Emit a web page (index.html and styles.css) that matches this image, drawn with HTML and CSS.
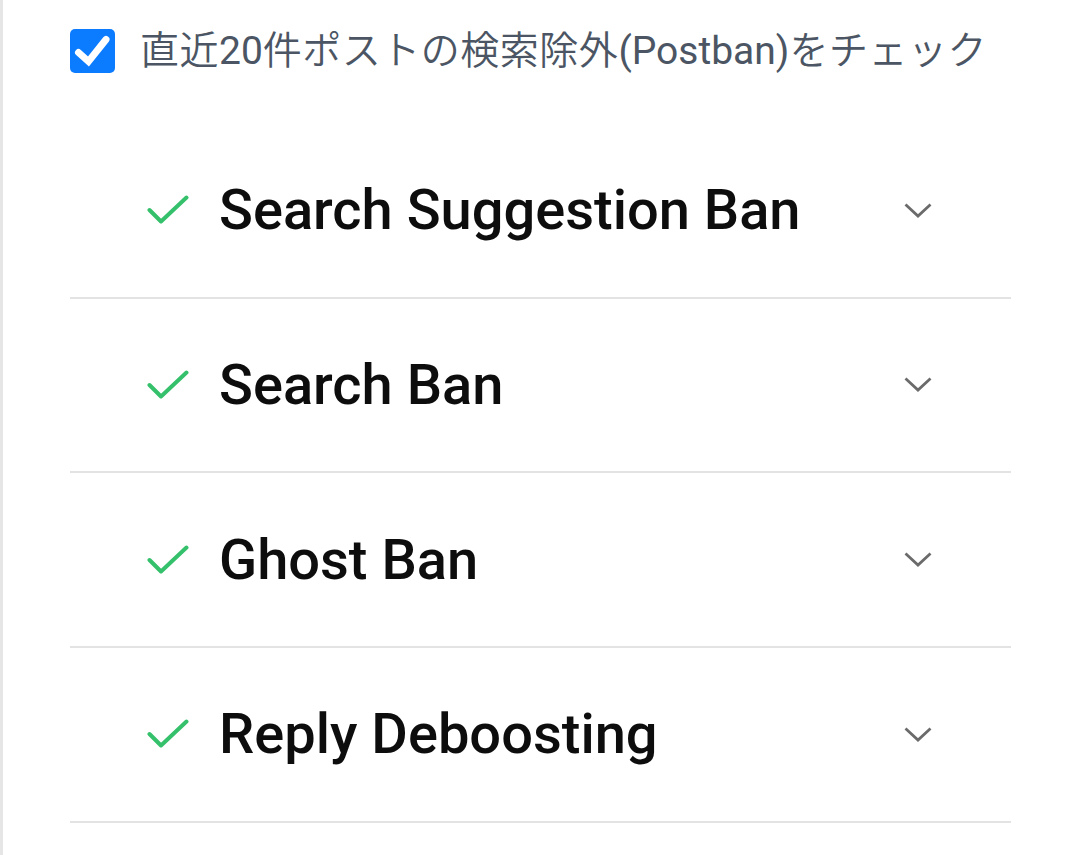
FILE: index.html
```html
<!DOCTYPE html>
<html lang="ja">
<head>
<meta charset="utf-8">
<link rel="stylesheet" href="styles.css">
</head>
<body>
<div class="page">
  <label class="filter">
    <span class="box">
      <svg viewBox="0 0 45 44" width="45" height="44"><path d="M8.5 23.5 L18.5 32.5 L36 10.5" fill="none" stroke="#fff" stroke-width="7" stroke-linecap="round" stroke-linejoin="miter"/></svg>
    </span>
    <span class="filter-text"><span class="ja">直近</span>20<span class="ja">件ポストの検索除外</span>(Postban)<span class="ja">をチェック</span></span>
  </label>
  <ul class="list">
    <li class="item">
      <svg class="ok" viewBox="0 0 42 30" width="42" height="30"><path d="M2.5 15 L14 26.5 L39.5 2.5" fill="none" stroke="#35c06c" stroke-width="4" stroke-linecap="round" stroke-linejoin="round"/></svg>
      <span class="title">Search Suggestion Ban</span>
      <svg class="chev" viewBox="0 0 28 15" width="28" height="15"><path d="M1.5 1.5 L14 13 L26.5 1.5" fill="none" stroke="#6b6b6b" stroke-width="2.8"/></svg>
    </li>
    <li class="item">
      <svg class="ok" viewBox="0 0 42 30" width="42" height="30"><path d="M2.5 15 L14 26.5 L39.5 2.5" fill="none" stroke="#35c06c" stroke-width="4" stroke-linecap="round" stroke-linejoin="round"/></svg>
      <span class="title">Search Ban</span>
      <svg class="chev" viewBox="0 0 28 15" width="28" height="15"><path d="M1.5 1.5 L14 13 L26.5 1.5" fill="none" stroke="#6b6b6b" stroke-width="2.8"/></svg>
    </li>
    <li class="item">
      <svg class="ok" viewBox="0 0 42 30" width="42" height="30"><path d="M2.5 15 L14 26.5 L39.5 2.5" fill="none" stroke="#35c06c" stroke-width="4" stroke-linecap="round" stroke-linejoin="round"/></svg>
      <span class="title">Ghost Ban</span>
      <svg class="chev" viewBox="0 0 28 15" width="28" height="15"><path d="M1.5 1.5 L14 13 L26.5 1.5" fill="none" stroke="#6b6b6b" stroke-width="2.8"/></svg>
    </li>
    <li class="item">
      <svg class="ok" viewBox="0 0 42 30" width="42" height="30"><path d="M2.5 15 L14 26.5 L39.5 2.5" fill="none" stroke="#35c06c" stroke-width="4" stroke-linecap="round" stroke-linejoin="round"/></svg>
      <span class="title">Reply Deboosting</span>
      <svg class="chev" viewBox="0 0 28 15" width="28" height="15"><path d="M1.5 1.5 L14 13 L26.5 1.5" fill="none" stroke="#6b6b6b" stroke-width="2.8"/></svg>
    </li>
  </ul>
</div>
</body>
</html>
```
FILE: styles.css
```css
html, body {
  margin: 0;
  padding: 0;
  background: #ffffff;
}
.page {
  box-sizing: border-box;
  min-height: 855px;
  width: 1075px;
  border-left: 3px solid #e6e6e6;
  padding: 29px 64px 0 67px;
  font-family: Roboto, "Noto Sans CJK JP", sans-serif;
}
.filter {
  display: flex;
  align-items: center;
  gap: 25px;
  height: 44px;
}
.box {
  width: 45px;
  height: 44px;
  border-radius: 5px;
  background: #0b7bff;
  display: flex;
  align-items: center;
  justify-content: center;
  flex: none;
}
.box svg { display: block; }
.filter-text {
  font-size: 39px;
  font-weight: 400;
  color: #4b5563;
  white-space: nowrap;
  line-height: 1;
}
.ja {
  font-weight: 350;
  letter-spacing: 0.5px;
}
.list {
  list-style: none;
  margin: 51px 0 0 0;
  padding: 0;
}
.item {
  height: 172.67px;
  border-bottom: 2px solid #e3e3e3;
  display: flex;
  align-items: center;
  padding-left: 77px;
  padding-right: 79px;
}
.ok {
  flex: none;
  display: block;
  margin-right: 30px;
}
.title {
  font-size: 56px;
  font-weight: 500;
  color: #0d0d0d;
  flex: 1;
  white-space: nowrap;
}
.chev {
  flex: none;
  display: block;
}
```
